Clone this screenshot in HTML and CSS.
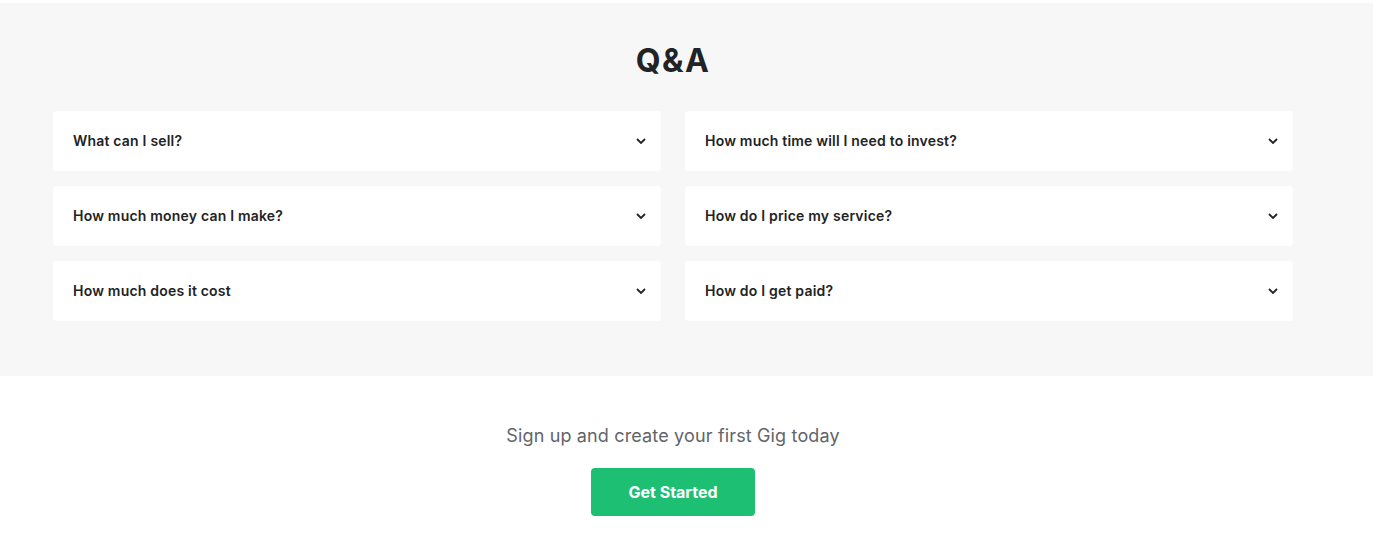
FILE: index.html
```html
<!DOCTYPE html>
<html lang="en">
<head>
<meta charset="utf-8">
<title>Q&amp;A</title>
<link rel="stylesheet" href="styles.css">
</head>
<body>
<section class="qa">
  <h2 class="qa-title">Q&amp;A</h2>
  <div class="qa-grid">
    <div class="qa-item"><span>What can I sell?</span><svg class="chev" viewBox="0 0 10 6" width="10" height="6"><path d="M1 1l4 4 4-4" fill="none" stroke="#222325" stroke-width="1.8"/></svg></div>
    <div class="qa-item"><span>How much time will I need to invest?</span><svg class="chev" viewBox="0 0 10 6" width="10" height="6"><path d="M1 1l4 4 4-4" fill="none" stroke="#222325" stroke-width="1.8"/></svg></div>
    <div class="qa-item"><span>How much money can I make?</span><svg class="chev" viewBox="0 0 10 6" width="10" height="6"><path d="M1 1l4 4 4-4" fill="none" stroke="#222325" stroke-width="1.8"/></svg></div>
    <div class="qa-item"><span>How do I price my service?</span><svg class="chev" viewBox="0 0 10 6" width="10" height="6"><path d="M1 1l4 4 4-4" fill="none" stroke="#222325" stroke-width="1.8"/></svg></div>
    <div class="qa-item"><span>How much does it cost</span><svg class="chev" viewBox="0 0 10 6" width="10" height="6"><path d="M1 1l4 4 4-4" fill="none" stroke="#222325" stroke-width="1.8"/></svg></div>
    <div class="qa-item"><span>How do I get paid?</span><svg class="chev" viewBox="0 0 10 6" width="10" height="6"><path d="M1 1l4 4 4-4" fill="none" stroke="#222325" stroke-width="1.8"/></svg></div>
  </div>
</section>
<section class="cta">
  <p class="cta-text">Sign up and create your first Gig today</p>
  <a class="cta-btn" href="#">Get Started</a>
</section>
</body>
</html>
```

FILE: styles.css
```css
* { box-sizing: border-box; }
html, body { margin: 0; padding: 0; background: #fff; }
body {
  padding-top: 3px;
  font-family: Inter, "Liberation Sans", sans-serif;
  color: #222325;
}
.qa {
  background: #f7f7f7;
  height: 373px;
  padding: 38px 80px 0 53px;
}
.qa-title {
  margin: 0 0 30px;
  text-align: center;
  font-size: 32px;
  line-height: 40px;
  font-weight: 700;
  letter-spacing: 1.5px;
  color: #222325;
}
.qa-grid {
  display: grid;
  grid-template-columns: 608px 608px;
  column-gap: 24px;
  row-gap: 15px;
}
.qa-item {
  background: #fff;
  border-radius: 4px;
  height: 60px;
  padding: 0 15px 2px 20px;
  display: flex;
  align-items: center;
  justify-content: space-between;
  font-size: 14px;
  font-weight: 600;
  letter-spacing: 0.2px;
  color: #222325;
}
.chev { display: block; margin-top: 2px; }
.cta {
  display: flex;
  flex-direction: column;
  align-items: center;
  padding-top: 47px;
  padding-right: 27px;
}
.cta-text {
  margin: 0 0 19px;
  font-size: 18px;
  line-height: 26px;
  letter-spacing: 0.15px;
  color: #62646a;
  font-weight: 400;
}
.cta-btn {
  display: flex;
  align-items: center;
  justify-content: center;
  width: 164px;
  height: 48px;
  background: #1dbf73;
  color: #fff;
  border-radius: 4px;
  font-size: 16px;
  font-weight: 700;
  text-decoration: none;
}
```
